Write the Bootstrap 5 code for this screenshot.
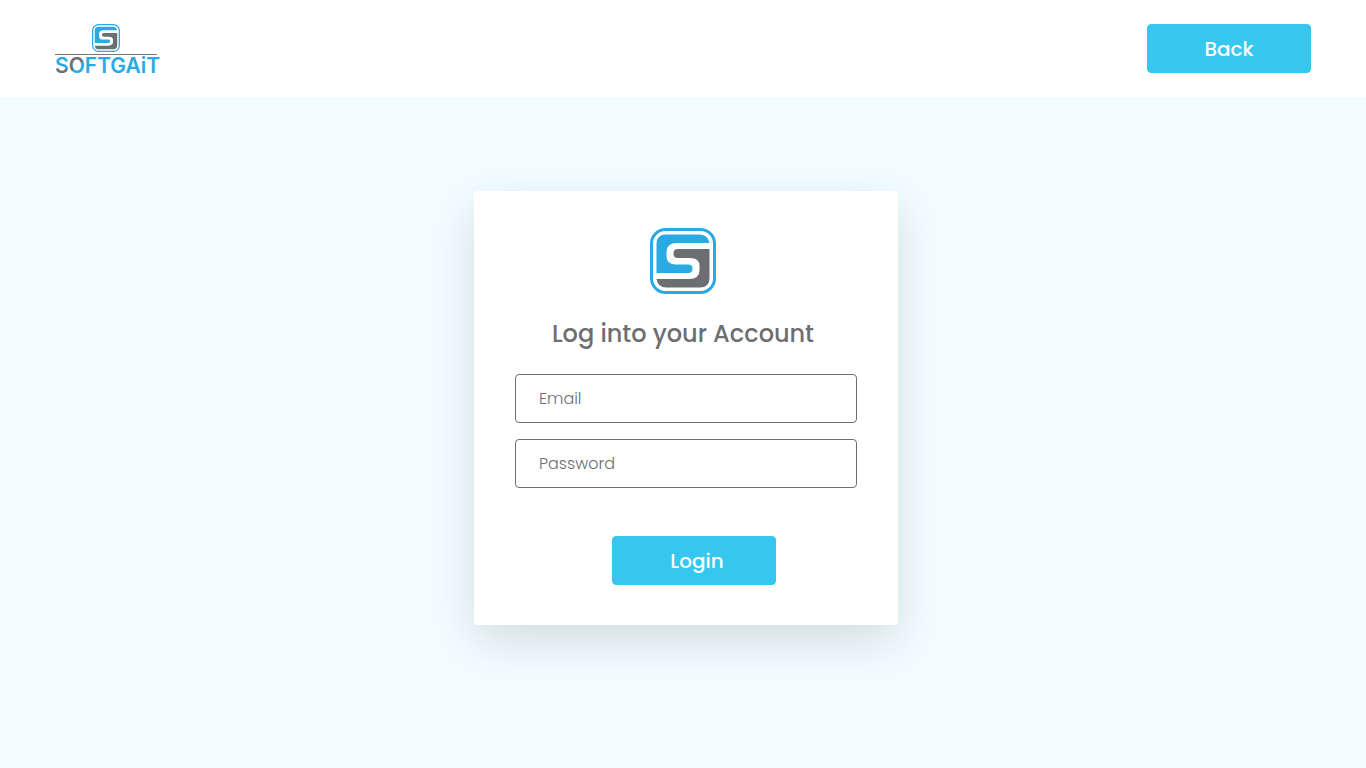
<!DOCTYPE html>
<html lang="en">
<head>
<meta charset="utf-8">
<meta name="viewport" content="width=device-width, initial-scale=1">
<title>Softgait - Login</title>
<link href="https://cdn.jsdelivr.net/npm/bootstrap@5.3.0/dist/css/bootstrap.min.css" rel="stylesheet">
<style>
  body { background: #f1fdff; font-family: Poppins, Inter, sans-serif; color: #6d6e71; }
  .site-header { padding: 24px 55px 18px; }
  .btn-brand {
    --bs-btn-bg: #35c7ed; --bs-btn-border-color: #35c7ed; --bs-btn-color: #fff;
    --bs-btn-hover-bg: #22b5dc; --bs-btn-hover-border-color: #22b5dc; --bs-btn-hover-color: #fff;
    --bs-btn-border-radius: 4px; --bs-btn-padding-y: 0;
    width: 164px; height: 49px; font-size: 20px; font-weight: 500;
  }
  .btn-submit { padding-left: 18px; }
  .login-area { padding: 94px 12px 48px 18px; }
  .login-card { max-width: 424px; border-radius: 4px; padding: 37px 41px 40px; box-shadow: 0 16px 48px rgba(0, 0, 0, .13); }
  .login-intro { padding-right: 6px; }
  .login-title { font-size: 24px; line-height: 32px; font-weight: 500; margin: 24px 0; }
  .login-field { height: 49px; padding: 0 23px; border: 1px solid #6d6e71; border-radius: 4px; font-size: 16px; font-weight: 300; color: #6d6e71; }
  .login-field::placeholder { color: #6d6e71; }
  .wordmark { font-family: Inter, sans-serif; font-weight: 600; font-size: 21px; }
</style>
</head>
<body class="min-vh-100">
<svg width="0" height="0" class="position-absolute" aria-hidden="true">
  <symbol id="emblem" viewBox="0 0 66 66">
    <rect x="1.5" y="1.5" width="63" height="63" rx="14" fill="#fff" stroke="#29aae2" stroke-width="3"/>
    <path fill="#29aae2" d="M16 6.500H49Q58 6.500 59.500 15H27Q16.500 15 16.500 24V28Q16.500 36.500 26 36.500H38Q42.500 36.500 42.500 40V41Q42.500 45 38 45H6.500V16Q6.500 6.500 16 6.500Z"/>
    <path fill="#6d6e71" d="M59.500 21V50Q59.500 59.500 50 59.500H16Q8 59.500 6.500 51H39Q49.500 51 49.500 42V38Q49.500 30 40 30H28Q23.500 30 23.500 26V25Q23.500 21 28 21Z"/>
  </symbol>
</svg>

<header class="site-header bg-white d-flex justify-content-between align-items-start">
  <a href="#" class="d-block" aria-label="Softgait home">
    <svg class="d-block" width="108" height="55" viewBox="0 0 108 55">
      <defs>
        <linearGradient id="letterS" gradientUnits="userSpaceOnUse" x1="0" y1="33" x2="0" y2="49">
          <stop offset=".75" stop-color="#29aae2"/><stop offset=".75" stop-color="#6d6e71"/>
        </linearGradient>
        <linearGradient id="letterO" gradientUnits="userSpaceOnUse" x1="16" y1="34" x2="28" y2="48">
          <stop offset=".55" stop-color="#6d6e71"/><stop offset=".55" stop-color="#29aae2"/>
        </linearGradient>
      </defs>
      <use href="#emblem" x="37" y="0" width="28" height="28"/>
      <path d="M0 30.500H102" stroke="#77787b"/>
      <text class="wordmark" x="0" y="49" fill="#29aae2"><tspan fill="url(#letterS)">S</tspan><tspan fill="url(#letterO)">O</tspan>FTGAiT</text>
    </svg>
  </a>
  <button type="button" class="btn btn-brand">Back</button>
</header>

<main class="login-area">
  <div class="login-card bg-white mx-auto">
    <div class="login-intro text-center">
      <svg width="66" height="66" class="d-block mx-auto" role="img" aria-label="Softgait"><use href="#emblem"/></svg>
      <h1 class="login-title">Log into your Account</h1>
    </div>
    <form>
      <label for="email" class="visually-hidden">Email</label>
      <input id="email" type="email" class="form-control login-field mb-3" placeholder="Email">
      <label for="password" class="visually-hidden">Password</label>
      <input id="password" type="password" class="form-control login-field mb-5" placeholder="Password">
      <div class="text-center ps-3">
        <button type="submit" class="btn btn-brand btn-submit d-block mx-auto">Login</button>
      </div>
    </form>
  </div>
</main>
<script src="https://cdn.jsdelivr.net/npm/bootstrap@5.3.0/dist/js/bootstrap.bundle.min.js"></script>
</body>
</html>
